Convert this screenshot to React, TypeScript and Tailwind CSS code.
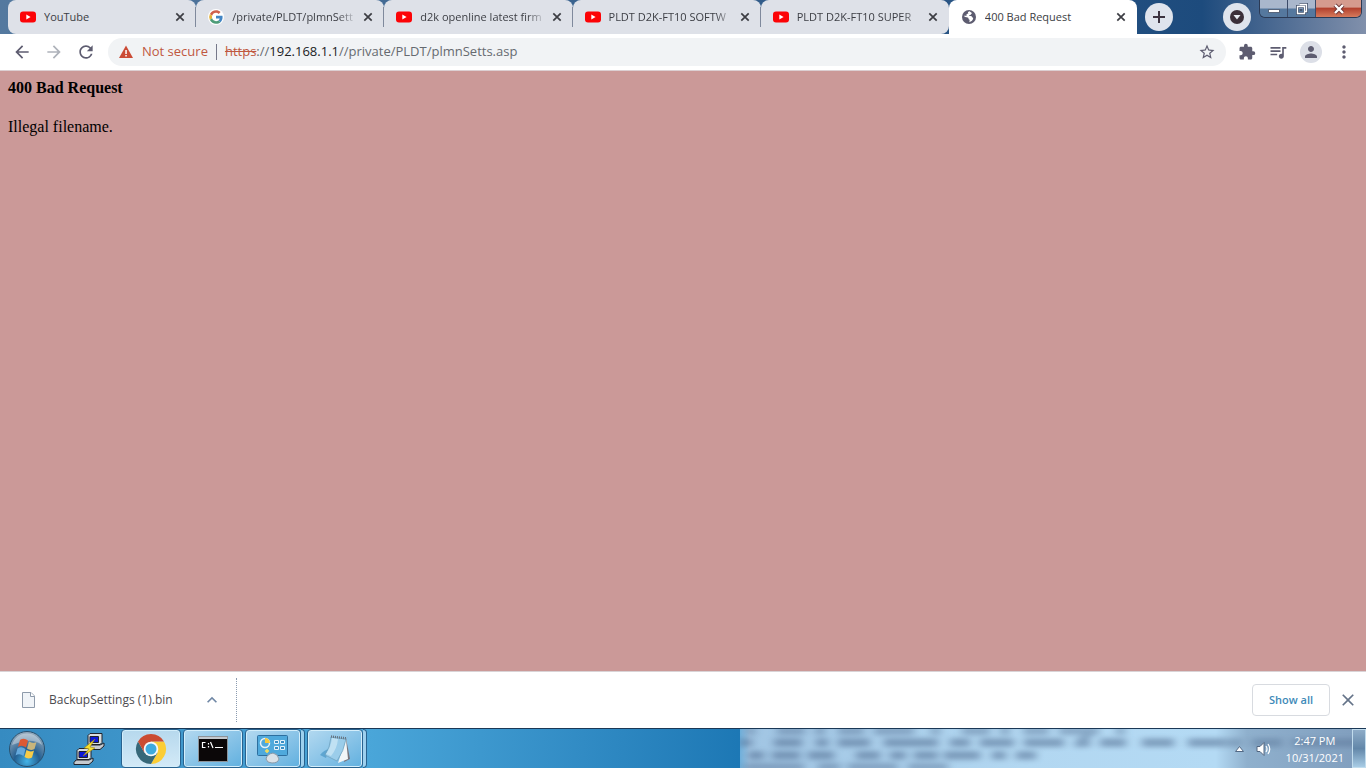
import React from 'react';
import { MdStarBorder, MdExtension, MdOutlineQueueMusic, MdPerson, MdMoreVert, MdArrowBack, MdArrowForward, MdRefresh, MdClose, MdKeyboardArrowUp } from 'react-icons/md';

function YouTubeIcon() {
  return (
    <svg width="16" height="16" viewBox="0 0 16 16" className="shrink-0" aria-hidden="true">
      <rect x="0" y="2.500" width="16" height="11" rx="3" fill="#fc0306" />
      <path d="M6.3 5.5v5l4.3-2.5z" fill="#fff" />
    </svg>
  );
}

function GoogleIcon() {
  return (
    <svg width="16" height="16" viewBox="-4 -4 56 56" className="shrink-0" aria-hidden="true">
      <circle cx="24" cy="24" r="28" fill="#fff" />
      <path fill="#d0604c" d="M24 9.5c3.5 0 6.700 1.200 9.200 3.600l6.900-6.900C35.900 2.400 30.500 0 24 0 14.600 0 6.500 5.400 2.600 13.200l8 6.200C12.400 13.700 17.700 9.500 24 9.500z" />
      <path fill="#4285c4" d="M47 24.500c0-1.600-.2-3.100-.4-4.500H24v9h12.900c-.6 3-2.300 5.500-4.800 7.200l7.700 6C44.400 38 47 31.800 47 24.500z" />
      <path fill="#e5b13a" d="M10.500 28.600A14.500 14.500 0 0 1 10.500 19.400l-8-6.200a24 24 0 0 0 0 21.600z" />
      <path fill="#4d9c78" d="M24 48c6.500 0 11.900-2.100 15.900-5.800l-7.700-6c-2.200 1.500-4.900 2.300-8.200 2.300-6.300 0-11.600-4.200-13.500-9.900l-8 6.200C6.500 42.600 14.600 48 24 48z" />
    </svg>
  );
}

function GlobeIcon() {
  return (
    <svg width="16" height="16" viewBox="0 0 16 16" className="shrink-0" aria-hidden="true">
      <circle cx="8" cy="8" r="7" fill="#5d5c70" />
      <path d="M8.500 2.300c-1.600.4-2 1.500-1 2.300-1.800 0-2.500 1-1.800 2.200H3c.2 1 1.300 1.500 2.700 1.400 1.500 0 2 .8 1.900 2 1.300.2 1.200 1.600.6 3 2.300-.7 3.900-2 4-4.200-1.200-.2-1-1.800-2.400-1.900H7.900c.2-1 1.300-.8 1.800-1.400.7-.7.3-1.200 1.500-1.400z" fill="#fff" />
    </svg>
  );
}

const tabs = [
  { title: 'YouTube', icon: 'yt', shape: 'rounded-t-lg rounded-bl-lg bg-[#dee1e8]' },
  { title: '/private/PLDT/plmnSett', icon: 'google', shape: 'rounded-t-lg bg-[#dee1e8]' },
  { title: 'd2k openline latest firm', icon: 'yt', shape: 'rounded-t-lg bg-[#dee1e8]' },
  { title: 'PLDT D2K-FT10 SOFTW', icon: 'yt', shape: 'rounded-t-lg bg-[#dee1e8]' },
  { title: 'PLDT D2K-FT10 SUPER', icon: 'yt', shape: 'rounded-t-lg rounded-br-lg bg-[#dee1e8]' },
  { title: '400 Bad Request', icon: 'globe', shape: 'rounded-t-lg bg-white' },
];

function TabStrip() {
  return (
    <header className="flex h-[34px] bg-linear-to-r from-[#54799f] from-0% via-[#1d4b7d] via-88% to-[#8190ab] pl-2">
      <div role="tablist" className="flex min-w-0 max-w-[1129px] flex-1">
        {tabs.map((tab, i) => (
          <div key={tab.title} className={'flex min-w-0 flex-1 items-center pl-3 ' + tab.shape}>
            <button role="tab" aria-selected={tab.icon === 'globe'} className="flex min-w-0 flex-1 items-center gap-2 text-left">
              {tab.icon === 'yt' && <YouTubeIcon />}
              {tab.icon === 'google' && <GoogleIcon />}
              {tab.icon === 'globe' && <GlobeIcon />}
              <span className={'min-w-0 flex-1 overflow-hidden text-[11px] whitespace-nowrap text-[#3c3e44] ' + (i > 0 && i < 5 ? 'mask-r-from-85%' : '')}>{tab.title}</span>
            </button>
            <button aria-label={'Close ' + tab.title} className="mr-2 ml-1 text-[#3c3d43]">
              <svg width="14" height="14" viewBox="0 0 14 14" aria-hidden="true">
                <path d="M3.300 3.300l7.400 7.400M10.700 3.300l-7.400 7.400" stroke="currentColor" strokeWidth="1.700" />
              </svg>
            </button>
            <span className={'h-5 w-px ' + (i < 4 ? 'bg-[#7f899c]' : '')} />
          </div>
        ))}
      </div>
      <button aria-label="New tab" className="mt-[3px] ml-2 grid size-7 shrink-0 place-items-center rounded-full bg-[#dfe4ed] text-[#3c3340]">
        <svg width="14" height="14" viewBox="0 0 14 14" aria-hidden="true">
          <path d="M7 1v12M1 7h12" stroke="currentColor" strokeWidth="2" />
        </svg>
      </button>
      <div className="ml-auto flex shrink-0">
        <button aria-label="Search tabs" className="mt-[3px] mr-2 grid size-7 place-items-center rounded-full bg-[#dfe4ed]">
          <svg width="16" height="16" viewBox="0 0 16 16" aria-hidden="true">
            <circle cx="8" cy="8" r="7" fill="#3b2f39" />
            <path d="M4.500 6h7L8 10.500z" fill="#e7ebf2" />
          </svg>
        </button>
        <div className="mr-1 flex h-[18px] overflow-hidden rounded-b-md border border-t-0 border-[#2b3a55] text-white">
          <button aria-label="Minimize" className="grid w-7 place-items-center border-r border-[#3b4b69] bg-linear-to-b from-[#a9b7cc] from-45% to-[#55789e] to-55%">
            <svg width="14" height="12" aria-hidden="true"><rect x="1.500" y="6.500" width="11" height="3" fill="#fff" stroke="#58667c" /></svg>
          </button>
          <button aria-label="Restore" className="grid w-7 place-items-center border-r border-[#3b4b69] bg-linear-to-b from-[#a9b7cc] from-45% to-[#55789e] to-55%">
            <svg width="12" height="12" fill="none" aria-hidden="true">
              <path d="M3.500 1.500h7v7h-2M1.500 3.500h7v7h-7z" stroke="#47566f" strokeWidth="3" />
              <path d="M3.500 1.500h7v7h-2M1.500 3.500h7v7h-7z" stroke="#fff" strokeWidth="1.300" />
              <rect x="4" y="6" width="2" height="2" fill="#47566f" />
            </svg>
          </button>
          <button aria-label="Close window" className="grid w-[45px] place-items-center bg-linear-to-b from-[#d59b8e] from-40% via-[#b3422f] via-50% to-[#d67a5c]">
            <svg width="14" height="12" fill="none" aria-hidden="true">
              <path d="M3 2l8 8M11 2l-8 8" stroke="#6b3535" strokeWidth="4" />
              <path d="M3 2l8 8M11 2l-8 8" stroke="#fff" strokeWidth="2.400" />
            </svg>
          </button>
        </div>
      </div>
    </header>
  );
}

function Toolbar() {
  return (
    <div className="flex h-9 items-center bg-white pr-3 pl-3 text-[#5d5c70]">
      <button aria-label="Back" className="mr-3"><MdArrowBack className="size-5" /></button>
      <button aria-label="Forward" className="mr-3 text-[#aeb2ba]"><MdArrowForward className="size-5" /></button>
      <button aria-label="Reload" className="mr-3"><MdRefresh className="size-5" /></button>
      <div className="flex h-7 flex-1 items-center rounded-full bg-[#f1f3f5] px-2.5">
        <svg width="16" height="16" viewBox="0 0 16 16" aria-hidden="true">
          <path d="M8 1.500l7 12.500H1z" fill="#cb4b35" />
          <path d="M7.300 6h1.500v4H7.300zM7.300 11h1.500v1.500H7.300z" fill="#fff" />
        </svg>
        <span className="ml-2 text-[13px] text-[#c0583f]">Not secure</span>
        <span className="mx-2 h-4 w-px bg-[#76798a]" />
        <p className="flex-1 text-[13px] text-[#666a70]">
          <s className="text-[#c0583f]">https</s>://<span className="text-[#202124]">192.168.1.1</span>//private/PLDT/plmnSetts.asp
        </p>
        <button aria-label="Bookmark this page"><MdStarBorder className="size-[18px]" /></button>
      </div>
      <button aria-label="Extensions" className="ml-3"><MdExtension className="size-[18px]" /></button>
      <button aria-label="Media control" className="ml-3"><MdOutlineQueueMusic className="size-5" /></button>
      <button aria-label="Profile" className="ml-3 grid size-[22px] place-items-center rounded-full bg-[#dcdfe7]"><MdPerson className="size-[18px]" /></button>
      <button aria-label="Menu" className="ml-3"><MdMoreVert className="size-5" /></button>
    </div>
  );
}

function DownloadShelf() {
  return (
    <section aria-label="Downloads" className="flex h-[57px] items-center border-t border-[#d9d3d6] bg-white pr-2">
      <div className="flex h-11 w-[237px] items-center border-r border-dotted border-[#8b9bb0] pl-[22px]">
        <svg width="13" height="16" aria-hidden="true">
          <path d="M.5.5h8.500l3.500 3.500v11.500H.5z" fill="#f0f4f8" stroke="#8e9bab" />
          <path d="M8.500.5v4h4" fill="#fff" stroke="#8e9bab" />
        </svg>
        <a href="#download" className="ml-3.5 flex-1 text-xs text-[#4d4b50]">BackupSettings (1).bin</a>
        <button aria-label="Download options" className="mr-3.5 text-[#6f87a5]"><MdKeyboardArrowUp className="size-5" /></button>
      </div>
      <button className="ml-auto h-8 w-[78px] rounded border border-[#d8dbe0] text-[11px] font-semibold text-[#3e8ab8]">Show all</button>
      <button aria-label="Close downloads" className="ml-2 text-[#647388]"><MdClose className="size-5" /></button>
    </section>
  );
}

function StartOrb() {
  return (
    <svg width="38" height="38" viewBox="0 0 38 38" aria-hidden="true">
      <defs>
        <radialGradient id="orb" cx="50%" cy="85%" r="80%">
          <stop offset="0" stopColor="#43b4e8" />
          <stop offset=".45" stopColor="#245f91" />
          <stop offset="1" stopColor="#92a9bc" />
        </radialGradient>
      </defs>
      <circle cx="19" cy="19" r="17.500" fill="url(#orb)" stroke="#28516f" />
      <path d="M4 15a15.500 15.500 0 0 1 30 0q-7-5-15-4T4 15z" fill="#fff" opacity=".35" />
      <path d="M12 10q4-2.500 8 .5l-2 7q-4-3-8-.5z" fill="#dd5933" />
      <path d="M21 11.500q4 2.500 7.500.5l-2 7q-4 2-7.500-.5z" fill="#c8b57c" />
      <path d="M9.500 18.500q4-2.500 8 .5l-2 7q-4-3-8-.5z" fill="#65a9dc" />
      <path d="M18.500 20q4 2.500 7.500.5l-2 7q-4 2-7.500-.5z" fill="#f7cc48" />
    </svg>
  );
}

function PuttyIcon() {
  return (
    <svg width="32" height="32" viewBox="0 0 32 32" aria-hidden="true">
      <g stroke="#20232b" strokeWidth="1">
        <path d="M15 2.500l2-2h12v9l-2 2H15z" fill="#d9dde0" />
        <path d="M17 3.500h8.500v6H17z" fill="#0a16d8" />
        <path d="M13 14.500l2-2.500h12l4-2v3l-4 3.500H13z" fill="#c6cacf" />
        <path d="M4 17.500l2-2h12v9l-2 2H4z" fill="#d9dde0" />
        <path d="M6 18.500h8.500v6H6z" fill="#0a16d8" />
        <path d="M1 29.500l2-2.500h13l4-2v3l-4 3.500H1z" fill="#c6cacf" />
      </g>
      <path d="M22 6l-11 9 5 1-6 7 12-8-5-1z" fill="#f8df2c" stroke="#917a1b" strokeWidth=".6" />
    </svg>
  );
}

function ChromeIcon() {
  return (
    <svg width="32" height="32" viewBox="0 0 32 32" aria-hidden="true">
      <path d="M16 8.500h13A15 15 0 0 1 16 31l6.500-11.300z" fill="#fbcd35" />
      <path d="M9.500 19.700L3 8.500A15 15 0 0 0 16 31l6.500-11.300z" fill="#376879" />
      <path d="M3 8.500A15 15 0 0 1 29 8.500H16l-6.500 11.200z" fill="#cb4c32" />
      <circle cx="16" cy="16" r="7.300" fill="#f7f9fa" />
      <circle cx="16" cy="16" r="5.500" fill="#3faadd" />
    </svg>
  );
}

function ConsoleIcon() {
  return (
    <svg width="30" height="26" viewBox="0 0 30 26" aria-hidden="true">
      <rect x=".5" y=".5" width="29" height="25" fill="#0b0708" stroke="#8d9399" />
      <path d="M1 2h28" stroke="#c3c9cf" strokeWidth="2" />
      <path d="M7.500 6.500h-3v5h3M10.500 7v1.500M10.500 10v1.500M12.500 6l2.500 6M17 11.500h8" stroke="#fff" fill="none" strokeWidth="1.200" />
    </svg>
  );
}

function ControlPanelIcon() {
  return (
    <svg width="32" height="30" viewBox="0 0 32 30" aria-hidden="true">
      <rect x=".5" y="1.500" width="30" height="20" rx="1" fill="#4fa9dc" stroke="#2d6f9f" />
      <circle cx="8" cy="9" r="4.500" fill="none" stroke="#e4f2fa" strokeWidth="1.500" />
      <path d="M8 9V4a5 5 0 0 1 5 5z" fill="#f6c83e" />
      <path d="M17.500 6.500h4v3h-4zM23.500 6.500h4v3h-4zM17.500 12.500h4v3h-4zM23.500 12.500h4v3h-4z" fill="#3b8ec3" stroke="#e4f2fa" />
      <path d="M10 15v4M8 17h4" stroke="#f7df5a" strokeWidth="1.500" />
      <path d="M9 25q1-5 7-6 5 1 6 6-1 4-7 4-5 0-6-4z" fill="#dbe2e8" stroke="#8999a8" />
    </svg>
  );
}

function NotepadIcon() {
  return (
    <svg width="32" height="30" viewBox="0 0 32 30" aria-hidden="true">
      <path d="M1 21q4-5 9-6l-3 9z" fill="#3e8fc2" opacity=".6" />
      <path d="M27 4l4 21-6 3z" fill="#77747c" />
      <path d="M27 5l2 20-10 4z" fill="#f1f5f7" />
      <path d="M12 3l15 2q-2 12-9 22L6 21Q11 14 12 3z" fill="#9bcdea" stroke="#6c9dba" strokeWidth=".7" />
      <path d="M13 4l6 1q-1 10-7 17l-5-2Q12 13 13 4z" fill="#c0e1f3" />
      <path d="M12 2.500l16 2" stroke="#66717c" strokeWidth="2.500" strokeDasharray="1 1" />
    </svg>
  );
}

// The window behind the glass, seen out of focus: rows of dark words on pale blue.
function BlurredBackdrop() {
  return (
    <svg className="absolute inset-y-0 right-0 h-full w-[626px]" viewBox="0 0 626 40" preserveAspectRatio="none" aria-hidden="true">
      <defs>
        <filter id="soft" filterUnits="userSpaceOnUse" x="-10" y="-10" width="650" height="60"><feGaussianBlur stdDeviation="4 3" /></filter>
        <linearGradient id="glass">
          <stop offset="0" stopColor="#6fb0dc" />
          <stop offset=".015" stopColor="#a1c5e3" />
          <stop offset=".45" stopColor="#b2d7f1" />
          <stop offset=".76" stopColor="#b4daf4" />
          <stop offset=".81" stopColor="#8fb0cd" />
          <stop offset="1" stopColor="#809dbd" />
        </linearGradient>
      </defs>
      <rect width="626" height="40" fill="url(#glass)" />
      <g filter="url(#soft)" stroke="#4a6488" fill="none" strokeWidth="9" opacity=".48">
        <path d="M6 2h390" strokeDasharray="9 22 28 10 10 13 26 10 40 17" opacity=".8" />
        <path d="M0 14h12M34 14h28M76 14h12M98 14h32M144 14h54M210 14h20M240 14h34M284 14h40M336 14h14M360 14h26M402 14h32M448 14h34" />
        <path d="M336 18l14-14" strokeWidth="6" />
        <path d="M8 27h16M32 27h28M68 27h26M116 27h24M150 27h16M174 27h24M204 27h36M252 27h14M276 27h20" />
        <path d="M4 39h60M78 39h22M108 39h50M168 39h40" opacity=".8" />
        <path d="M476 14h26M512 14h30M552 14h70" opacity=".7" />
      </g>
    </svg>
  );
}

const apps = [
  { label: 'Google Chrome', icon: <ChromeIcon />, face: 'w-[60px] bg-linear-to-b from-[#b6d8ed] to-[#d3eaf7]', stacked: false },
  { label: 'Command Prompt', icon: <ConsoleIcon />, face: 'w-[60px] bg-linear-to-br from-[#b3d9f0] to-[#60b0df]', stacked: false },
  { label: 'Control Panel', icon: <ControlPanelIcon />, face: 'w-14 bg-linear-to-br from-[#b3d9f0] to-[#60b0df]', stacked: true },
  { label: 'Notepad', icon: <NotepadIcon />, face: 'w-14 bg-linear-to-br from-[#b3d9f0] to-[#60b0df]', stacked: true },
];

function Taskbar() {
  return (
    <footer className="relative flex h-10 items-stretch border-t border-[#1b3856] bg-linear-to-r from-[#368bc1] via-[#4aa6d9] via-27% to-[#1d78b5] to-54%">
      <BlurredBackdrop />
      <button aria-label="Start" className="ml-2 grid w-[38px] place-items-center"><StartOrb /></button>
      <button aria-label="PuTTY" className="mr-4 ml-[27px] grid w-8 place-items-center"><PuttyIcon /></button>
      <div className="flex gap-0.5">
        {apps.map((app) => (
          <div key={app.label} className="flex">
            <button
              aria-label={app.label}
              className={'grid place-items-center rounded-sm border border-[#28628f] inset-ring inset-ring-[#d3eefb] ' + app.face}
            >
              {app.icon}
            </button>
            {app.stacked && <span className="w-1 rounded-r-sm border border-l-0 border-[#28628f] bg-[#9dd0ee]" />}
          </div>
        ))}
      </div>
      <div className="relative ml-auto flex items-center text-white">
        <button aria-label="Show hidden icons" className="mr-3">
          <svg width="9" height="6" aria-hidden="true"><path d="M4.500.5L8.500 5.500h-8z" fill="#fff" stroke="#536985" /></svg>
        </button>
        <button aria-label="Volume" className="mr-3.5">
          <svg width="16" height="16" fill="none" aria-hidden="true">
            <path d="M1 5.500h3l4-4v13l-4-4H1z" fill="#fff" stroke="#526680" />
            <path d="M10 5q2 3 0 6M12 3q3.500 5 0 10" stroke="#fff" strokeWidth="1.200" />
          </svg>
        </button>
        <time dateTime="2021-10-31T14:47" className="mr-2 text-center text-[11px] leading-[17px]">
          2:47 PM<br />10/31/2021
        </time>
        <button aria-label="Show desktop" className="h-full w-3.5 border border-[#c1dced] bg-linear-to-b from-[#8eacc8] via-[#6387a9] to-[#a8cce5]" />
      </div>
    </footer>
  );
}

export default function App() {
  return (
    <div className="flex min-h-screen flex-col font-['Open_Sans','Noto_Sans',sans-serif]">
      <TabStrip />
      <Toolbar />
      <main className="flex-1 border-t border-[#dccfd2] bg-[#cb9998] px-2 pt-[7px] font-['Liberation_Serif',serif] text-base leading-[19px] text-black">
        <h1 className="font-bold">400 Bad Request</h1>
        <p className="mt-5">Illegal filename.</p>
      </main>
      <DownloadShelf />
      <Taskbar />
    </div>
  );
}
